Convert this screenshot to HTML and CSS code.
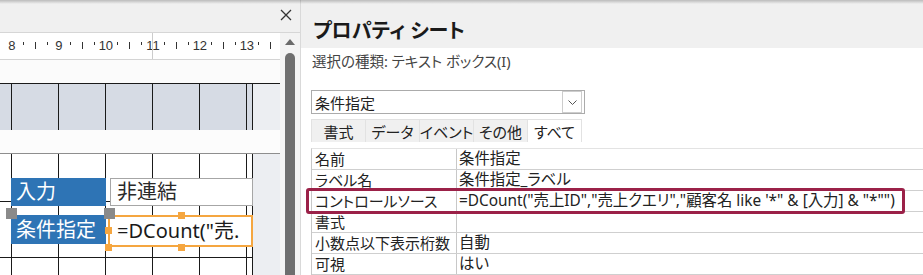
FILE: index.html
```html
<!DOCTYPE html>
<html lang="ja">
<head>
    <meta charset="UTF-8">
    <meta name="viewport" content="width=device-width, initial-scale=1.0">
    <title>プロパティ シート</title>
    <link rel="stylesheet" href="styles.css">
</head>
<body>
<div class="app">

    <!-- Form design view -->
    <div class="design">
        <div class="design-head">
            <svg class="close" width="12" height="12" viewBox="0 0 12 12">
                <path d="M1 1 L11 11 M11 1 L1 11" stroke="#333" stroke-width="1.3" fill="none"/>
            </svg>
        </div>
        <div class="design-body">
            <div class="surface">
                <div class="ruler">
                    <div class="unit"><span class="c num">8</span><span class="c"><i class="t"></i></span><span class="c"><i class="t big"></i></span><span class="c"><i class="t"></i></span></div>
                    <div class="unit"><span class="c num">9</span><span class="c"><i class="t"></i></span><span class="c"><i class="t big"></i></span><span class="c"><i class="t"></i></span></div>
                    <div class="unit"><span class="c num">10</span><span class="c"><i class="t"></i></span><span class="c"><i class="t big"></i></span><span class="c"><i class="t"></i></span></div>
                    <div class="unit"><span class="c num">11</span><span class="c"><i class="t"></i></span><span class="c"><i class="t big"></i></span><span class="c"><i class="t"></i></span></div>
                    <div class="unit"><span class="c num">12</span><span class="c"><i class="t"></i></span><span class="c"><i class="t big"></i></span><span class="c"><i class="t"></i></span></div>
                    <div class="unit"><span class="c num">13</span><span class="c"><i class="t"></i></span><span class="c"><i class="t big"></i></span><span class="c"><i class="t"></i></span></div>
                    <span class="ruler-mark"></span>
                </div>
                <div class="ruler-gap"></div>
                <div class="section-bar"><div class="bar-grid"></div></div>
                <div class="section-gap"></div>
                <div class="detail">
                    <div class="detail-grid">
                        <div class="ctl label lbl-input">入力</div>
                        <div class="ctl label lbl-cond">条件指定</div>
                        <div class="ctl textbox tb-input">非連結</div>
                        <div class="ctl textbox tb-cond">=DCount("売.</div>
                        <span class="handle big" style="left: 6px; top: 54px;"></span>
                        <span class="handle big" style="left: 104px; top: 54px;"></span>
                        <span class="handle" style="left: 178px; top: 58px;"></span>
                        <span class="handle" style="left: 105px; top: 73px;"></span>
                        <span class="handle" style="left: 105px; top: 90px;"></span>
                        <span class="handle" style="left: 178px; top: 90px;"></span>
                    </div>
                </div>
            </div>
            <div class="vscroll">
                <span class="arrow"></span>
                <div class="thumb"></div>
            </div>
        </div>
    </div>

    <!-- Property sheet -->
    <div class="props">
        <div class="props-title">プロパティ シート</div>
        <div class="sel-type">選択の種類: テキスト ボックス(I)</div>
        <div class="combo">
            <span class="combo-text">条件指定</span>
            <span class="combo-btn">
                <svg width="9" height="5" viewBox="0 0 9 5"><path d="M0.5 0.5 L4.5 4.5 L8.5 0.5" stroke="#555" fill="none"/></svg>
            </span>
        </div>
        <div class="tabs">
            <div class="tab">書式</div>
            <div class="tab">データ</div>
            <div class="tab">イベント</div>
            <div class="tab">その他</div>
            <div class="tab active">すべて</div>
        </div>
        <div class="sheet">
            <div class="row"><div class="name">名前</div><div class="val">条件指定</div></div>
            <div class="row"><div class="name">ラベル名</div><div class="val">条件指定_ラベル</div></div>
            <div class="row"><div class="name">コントロールソース</div><div class="val">=DCount("売上ID","売上クエリ","顧客名 like '*" &amp; [入力] &amp; "*"")</div></div>
            <div class="row"><div class="name">書式</div><div class="val"></div></div>
            <div class="row"><div class="name">小数点以下表示桁数</div><div class="val">自動</div></div>
            <div class="row"><div class="name">可視</div><div class="val">はい</div></div>
            <div class="hl"></div>
        </div>
    </div>

</div>
</body>
</html>
```

FILE: styles.css
```css
* {
    box-sizing: border-box;
}

body {
    margin: 0;
    font-family: "Noto Sans", "Noto Sans CJK JP", sans-serif;
    font-feature-settings: "palt";
    color: #222;
    background-color: #ffffff;
    overflow: hidden;
}

.app {
    position: relative;
    display: flex;
    width: 923px;
    height: 275px;
    overflow: hidden;
}

/* soft shadow under the ribbon */
.app::before {
    content: "";
    position: absolute;
    top: 0;
    left: 0;
    right: 0;
    height: 4px;
    background: linear-gradient(rgba(0, 0, 0, 0.22), rgba(0, 0, 0, 0));
    z-index: 5;
}

/* Design view */
.design {
    width: 300px;
    flex: none;
    display: flex;
    flex-direction: column;
    background-color: #f0f0f0;
}

.design-head {
    height: 33px;
    flex: none;
    display: flex;
    justify-content: flex-end;
    align-items: center;
    padding: 0 8px 2px 0;
    border-bottom: 1px solid #d6d6d6;
}

.design-body {
    flex: 1;
    display: flex;
    min-height: 0;
}

.surface {
    width: 280px;
    flex: none;
    display: flex;
    flex-direction: column;
    background-color: #ffffff;
    overflow: hidden;
}

.ruler {
    position: relative;
    height: 27px;
    flex: none;
    display: flex;
    padding-left: 6px;
    border-bottom: 1px solid #d4d4d4;
}

.unit {
    width: 47px;
    flex: none;
    display: flex;
}

.c {
    width: 11.75px;
    height: 24px;
    flex: none;
    display: flex;
    justify-content: center;
    align-items: center;
}

.num {
    font-family: "Liberation Sans", sans-serif;
    font-size: 13px;
    color: #333;
}

.t {
    width: 1px;
    height: 3px;
    margin-bottom: 3px;
    background-color: #333;
}

.t.big {
    height: 7px;
    margin-bottom: 0;
}

.ruler-mark {
    position: absolute;
    left: 152px;
    top: 0;
    bottom: 0;
    width: 1px;
    background-color: #cccccc;
}

.ruler-gap {
    height: 23px;
    flex: none;
    background-color: #fbfbfb;
}

.section-bar {
    height: 47px;
    flex: none;
    border-top: 1px solid #1a1a1a;
    background-color: #eceef2;
}

.bar-grid {
    width: 253px;
    height: 100%;
    border-right: 1px solid #1a1a1a;
    background-color: #d6dbe4;
    background-image: linear-gradient(to right, #1a1a1a 1px, transparent 1px);
    background-size: 47px 100%;
    background-position: 11px 0;
}

.section-gap {
    height: 24px;
    flex: none;
    background-color: #fcfcfc;
    border-bottom: 1px solid #8e8e8e;
}

.detail {
    flex: 1;
    background-color: #eceef2;
}

.detail-grid {
    position: relative;
    width: 253px;
    height: 100%;
    border-right: 1px solid #1a1a1a;
    background:
        linear-gradient(#1a1a1a, #1a1a1a) 0 47px / 100% 1px no-repeat,
        linear-gradient(#1a1a1a, #1a1a1a) 0 103px / 100% 1px no-repeat,
        linear-gradient(to right, #1a1a1a 1px, transparent 1px) 11px 0 / 47px 100%,
        #ffffff;
}

/* controls placed on the form canvas */
.ctl {
    position: absolute;
    display: flex;
    align-items: center;
    font-size: 20px;
    line-height: 24px;
    white-space: nowrap;
    overflow: hidden;
}

.label {
    left: 11px;
    width: 95px;
    padding-left: 5px;
    background-color: #2e74b5;
    color: #ffffff;
}

.lbl-input {
    top: 24px;
    height: 28px;
}

.lbl-cond {
    top: 61px;
    height: 29px;
}

.textbox {
    background-color: #ffffff;
    color: #2a2a2a;
}

.tb-input {
    left: 110px;
    top: 24px;
    width: 143px;
    height: 28px;
    padding-left: 6px;
    border: 1px solid #a6a6a6;
}

.tb-cond {
    left: 108px;
    top: 61px;
    width: 145px;
    height: 32px;
    padding-left: 7px;
    border: 2px solid #f5a640;
    color: #1a1a1a;
}

.handle {
    position: absolute;
    width: 7px;
    height: 7px;
    background-color: #f5a640;
}

.handle.big {
    width: 11px;
    height: 11px;
    background-color: #8a8a8a;
}

/* Scrollbar */
.vscroll {
    width: 20px;
    flex: none;
    display: flex;
    flex-direction: column;
    align-items: center;
    background-color: #f3f3f3;
}

.arrow {
    margin-top: 6px;
    width: 0;
    height: 0;
    border-left: 5px solid transparent;
    border-right: 5px solid transparent;
    border-bottom: 6px solid #6a6a6a;
}

.thumb {
    margin-top: 8px;
    width: 10px;
    flex: 1;
    border-radius: 5px 5px 0 0;
    background-color: #6e6e6e;
}

/* Property sheet */
.props {
    flex: 1;
    display: flex;
    flex-direction: column;
    border-left: 1px solid #d9d9d9;
    background-color: #ffffff;
}

.props-title {
    height: 48px;
    flex: none;
    padding: 18px 0 0 12px;
    background-color: #f0f0f0;
    font-size: 20px;
    font-weight: bold;
    line-height: 26px;
    color: #1a1a1a;
}

.sel-type {
    height: 26px;
    padding-left: 11px;
    font-size: 14.5px;
    line-height: 26px;
    color: #444;
}

.combo {
    margin: 16px 0 0 10px;
    width: 274px;
    height: 28px;
    display: flex;
    align-items: center;
    padding-left: 3px;
    border: 1px solid #ababab;
    font-size: 15px;
}

.combo-text {
    flex: 1;
}

.combo-btn {
    width: 20px;
    height: 22px;
    margin-right: 2px;
    display: flex;
    justify-content: center;
    align-items: center;
    border: 1px solid #cdcdcd;
}

.tabs {
    margin: 5px 0 0 10px;
    height: 27px;
    display: flex;
}

.tab {
    width: 55px;
    margin-right: -1px;
    display: flex;
    justify-content: center;
    align-items: center;
    white-space: nowrap;
    background-color: #f0f0f0;
    border: 1px solid #e2e2e2;
    border-bottom: none;
    font-size: 15px;
}

.tab.active {
    background-color: #ffffff;
}

.sheet {
    position: relative;
    margin: 6px 0 0 10px;
    border-top: 1px solid #e3e3e3;
    border-left: 1px solid #c8c8c8;
}

.row {
    height: 21px;
    display: flex;
    border-bottom: 1px solid #cfcfcf;
    font-size: 15px;
    line-height: 20px;
    white-space: nowrap;
}

.name {
    width: 145px;
    flex: none;
    padding-left: 3px;
    border-right: 1px solid #c8c8c8;
}

.val {
    flex: 1;
    padding-left: 2px;
    font-size: 15.4px;
}

/* highlight around the control source row */
.hl {
    position: absolute;
    left: -6px;
    top: 39px;
    width: 599px;
    height: 26px;
    border: 3px solid #9b2148;
    border-radius: 3px;
}
```
